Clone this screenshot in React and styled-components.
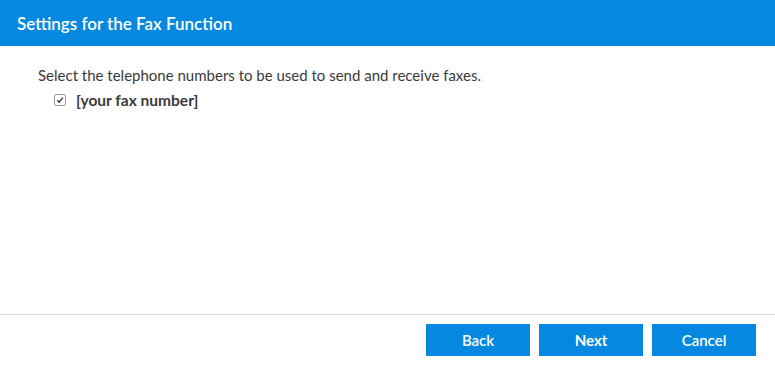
import React from "react";
import styled, { createGlobalStyle } from "styled-components";

const Global = createGlobalStyle`
  html, body { margin: 0; padding: 0; background: #fff; }
  body { font-family: Lato, "Open Sans", sans-serif; }
`;

const Page = styled.div`
  width: 775px;
  height: 365px;
  display: flex;
  flex-direction: column;
  background: #fff;
`;

const Header = styled.div`
  height: 46px;
  background: #0589e0;
  color: #fff;
  display: flex;
  align-items: center;
  padding: 0 17px;
  font-size: 17px;
  font-weight: 600;
  box-sizing: border-box;
`;

const Body = styled.div`
  flex: 1;
  padding: 19px 38px 0;
  color: #3a3a3a;
  font-size: 15px;
`;

const Intro = styled.p`
  margin: 0;
  line-height: 20px;
`;

const Option = styled.label`
  display: flex;
  align-items: center;
  gap: 10px;
  margin: 5px 0 0 16px;
  font-weight: 700;
  font-size: 15.5px;
  line-height: 20px;
  color: #3a3a3a;
`;

const Box = styled.span`
  width: 10px;
  height: 10px;
  border: 1px solid #999;
  border-radius: 2px;
  display: inline-flex;
  align-items: center;
  justify-content: center;
  background: #fff;
`;

const Footer = styled.div`
  border-top: 1px solid #dcdcdc;
  height: 51px;
  display: flex;
  justify-content: flex-end;
  align-items: flex-start;
  gap: 9px;
  padding: 9px 19px 0 0;
  box-sizing: border-box;
`;

const Button = styled.button`
  width: 104px;
  height: 32px;
  border: none;
  background: #0589e0;
  color: #fff;
  font-family: inherit;
  font-size: 15px;
  font-weight: ${(p) => (p.$primary ? 700 : 600)};
  padding: 0;
  cursor: pointer;
`;

export default function App() {
  return (
    <Page>
      <Global />
      <Header>Settings for the Fax Function</Header>
      <Body>
        <Intro>Select the telephone numbers to be used to send and receive faxes.</Intro>
        <Option>
          <Box>
            <svg width="8" height="8" viewBox="0 0 8 8">
              <path d="M1.2 4.2 L3.2 6.2 L6.8 1.6" fill="none" stroke="#333" strokeWidth="1.3" />
            </svg>
          </Box>
          [your fax number]
        </Option>
      </Body>
      <Footer>
        <Button>Back</Button>
        <Button $primary>Next</Button>
        <Button>Cancel</Button>
      </Footer>
    </Page>
  );
}
